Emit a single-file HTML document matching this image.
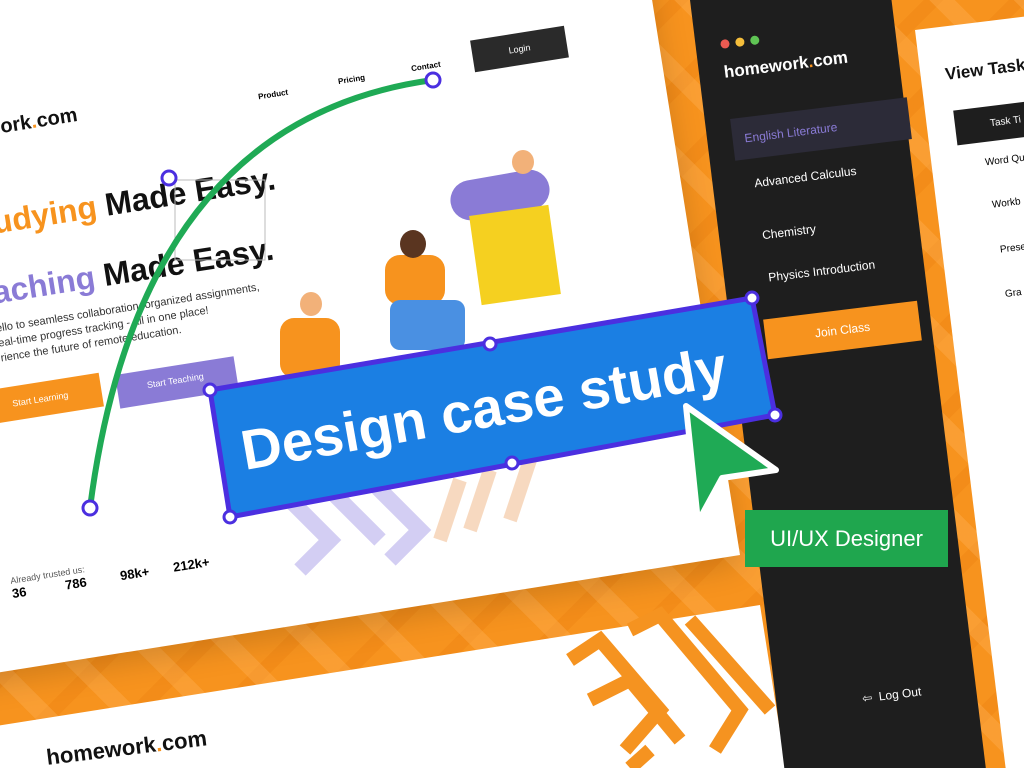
<!DOCTYPE html>
<html><head><meta charset="utf-8"><style>
*{margin:0;padding:0;box-sizing:border-box;white-space:nowrap}
html,body{width:1024px;height:768px;overflow:hidden}
body{position:relative;background:#f7931e;font-family:"Liberation Sans",sans-serif}
#w{position:absolute;left:0;top:0;width:1024px;height:768px;overflow:hidden}
.abs{position:absolute}
.pat{background:repeating-linear-gradient(45deg,rgba(255,180,90,.35) 0 18px,transparent 18px 60px),repeating-linear-gradient(-45deg,rgba(230,120,10,.25) 0 14px,transparent 14px 60px)}
</style></head><body><div id="w">
<div class="abs pat" style="inset:0"></div>

<!-- bottom white card -->
<div class="abs" style="left:-40px;top:605px;width:800px;height:300px;background:#fff;transform:rotate(-9deg);transform-origin:100% 0"></div>
<div class="abs" style="left:45px;top:745px;font-size:22px;font-weight:bold;color:#111;transform:rotate(-7deg);transform-origin:0 0">homework<span style="color:#f7931e">.</span>com</div>
<svg class="abs" style="left:530px;top:600px" width="260" height="168"><g fill="none" stroke="#f59320" stroke-width="14"><path d="M40 60 L70 40 L130 110 L95 150 M60 100 L100 80 L150 140 M100 30 L130 15 L210 110 L185 150 M160 20 L240 110 M120 150 L100 168"/></g></svg>

<!-- main white card -->
<div class="abs" style="left:-60px;top:-125px;width:800px;height:680px;background:#fff;transform:rotate(-9deg);transform-origin:100% 100%;box-shadow:0 10px 30px rgba(0,0,0,.15)"></div>

<div class="abs" style="left:0;top:110px;font-size:20px;font-weight:bold;transform:rotate(-9deg);color:#111">ork<span style="color:#f7931e">.</span>com</div>
<div class="abs" style="left:-10px;top:205px;font-size:32px;font-weight:bold;transform:rotate(-9deg);transform-origin:0 0;color:#111"><span style="color:#f7931e">udying</span> Made Easy.</div>
<div class="abs" style="left:-10px;top:275px;font-size:32px;font-weight:bold;transform:rotate(-9deg);transform-origin:0 0;color:#111"><span style="color:#8a7bd6">aching</span> Made Easy.</div>
<div class="abs" style="left:-5px;top:322px;font-size:11px;line-height:15px;color:#333;transform:rotate(-9deg);transform-origin:0 0">ello to seamless collaboration, organized assignments,<br>eal-time progress tracking - all in one place!<br>rience the future of remote education.</div>
<div class="abs" style="left:-10px;top:390px;width:110px;height:34px;background:#f7931e;color:#fff;font-size:9px;padding:12px 20px;transform:rotate(-9deg);transform-origin:0 0">Start Learning</div>
<div class="abs" style="left:115px;top:375px;width:120px;height:34px;background:#8a7bd6;color:#fff;font-size:9px;padding:10px 30px;transform:rotate(-9deg);transform-origin:0 0">Start Teaching</div>
<div class="abs" style="left:258px;top:90px;font-size:8px;font-weight:bold;transform:rotate(-9deg)">Product</div>
<div class="abs" style="left:338px;top:75px;font-size:8px;font-weight:bold;transform:rotate(-9deg)">Pricing</div>
<div class="abs" style="left:411px;top:62px;font-size:8px;font-weight:bold;transform:rotate(-9deg)">Contact</div>
<div class="abs" style="left:472px;top:33px;width:95px;height:32px;background:#2a2a2a;color:#fff;font-size:9px;text-align:center;line-height:32px;transform:rotate(-9deg)">Login</div>
<div class="abs" style="left:10px;top:570px;font-size:9px;color:#555;transform:rotate(-9deg)">Already trusted us:</div>
<div class="abs" style="left:12px;top:585px;font-size:13px;font-weight:bold;transform:rotate(-9deg)">36</div>
<div class="abs" style="left:65px;top:576px;font-size:13px;font-weight:bold;transform:rotate(-9deg)">786</div>
<div class="abs" style="left:120px;top:566px;font-size:13px;font-weight:bold;transform:rotate(-9deg)">98k+</div>
<div class="abs" style="left:173px;top:557px;font-size:13px;font-weight:bold;transform:rotate(-9deg)">212k+</div>

<!-- illustration approx -->
<div class="abs" style="left:450px;top:175px;width:100px;height:40px;background:#8a7bd6;border-radius:20px;transform:rotate(-10deg)"></div>
<div class="abs" style="left:475px;top:210px;width:80px;height:90px;background:#f5d020;transform:rotate(-8deg)"></div>
<div class="abs" style="left:385px;top:255px;width:60px;height:50px;background:#f7931e;border-radius:15px"></div>
<div class="abs" style="left:390px;top:300px;width:75px;height:50px;background:#4a90e2;border-radius:10px"></div>
<div class="abs" style="left:280px;top:318px;width:60px;height:60px;background:#f7931e;border-radius:14px"></div>
<div class="abs" style="left:400px;top:230px;width:26px;height:28px;background:#5a3520;border-radius:50%"></div>
<div class="abs" style="left:300px;top:292px;width:22px;height:24px;background:#f2b179;border-radius:50%"></div>
<div class="abs" style="left:512px;top:150px;width:22px;height:24px;background:#f2b179;border-radius:50%"></div>
<svg class="abs" style="left:280px;top:440px" width="380" height="140"><g fill="none" stroke="#c8c2f0" stroke-width="16" opacity=".8"><path d="M10 60 L50 100 L20 130 M50 50 L100 100 M90 40 L140 90 L110 120"/></g><g fill="none" stroke="#f5cfb0" stroke-width="14" opacity=".8"><path d="M180 40 L160 100 M210 30 L190 90 M250 20 L230 80"/></g></svg>

<!-- dark panel -->
<div class="abs" style="left:690px;top:0;width:200px;height:800px;background:#1e1e1e;transform:rotate(-7deg);transform-origin:0 0"></div>
<div class="abs" style="left:720px;top:40px;width:200px;transform:rotate(-7deg);transform-origin:0 0;color:#fff">
 <div style="display:flex;gap:6px;margin-bottom:14px"><span style="width:9px;height:9px;border-radius:50%;background:#ec5b52"></span><span style="width:9px;height:9px;border-radius:50%;background:#f5be3b"></span><span style="width:9px;height:9px;border-radius:50%;background:#5fc454"></span></div>
 <div style="font-size:17px;font-weight:bold">homework<span style="color:#f7931e">.</span>com</div>
</div>
<div class="abs" style="left:732px;top:108px;width:178px;height:42px;background:#2c2b38;transform:rotate(-7deg);color:#8a7bd6;font-size:12px;padding:14px 12px">English Literature</div>
<div class="abs" style="left:754px;top:170px;color:#fff;font-size:12px;transform:rotate(-7deg)">Advanced Calculus</div>
<div class="abs" style="left:762px;top:225px;color:#fff;font-size:12px;transform:rotate(-7deg)">Chemistry</div>
<div class="abs" style="left:768px;top:264px;color:#fff;font-size:12px;transform:rotate(-7deg)">Physics Introduction</div>
<div class="abs" style="left:765px;top:310px;width:155px;height:40px;background:#f7931e;color:#fff;font-size:12px;text-align:center;line-height:40px;transform:rotate(-7deg)">Join Class</div>
<div class="abs" style="left:862px;top:688px;color:#fff;font-size:12px;transform:rotate(-7deg)">⇦ &nbsp;Log Out</div>

<!-- right white panel -->
<div class="abs" style="left:915px;top:30px;width:200px;height:800px;background:#fff;transform:rotate(-7deg);transform-origin:0 0"></div>
<div class="abs" style="left:945px;top:60px;font-size:17px;font-weight:bold;color:#111;transform:rotate(-7deg)">View Task</div>
<div class="abs" style="left:955px;top:105px;width:90px;height:35px;background:#1e1e1e;color:#fff;font-size:10px;padding:12px 35px;transform:rotate(-7deg)">Task Ti</div>
<div class="abs" style="left:985px;top:155px;font-size:10px;transform:rotate(-7deg)">Word Qu</div>
<div class="abs" style="left:992px;top:198px;font-size:10px;transform:rotate(-7deg)">Workb</div>
<div class="abs" style="left:1000px;top:243px;font-size:10px;transform:rotate(-7deg)">Prese</div>
<div class="abs" style="left:1005px;top:288px;font-size:10px;transform:rotate(-7deg)">Gra</div>

<svg class="abs" style="left:0;top:0" width="1024" height="768">
 <rect x="175" y="180" width="90" height="80" fill="none" stroke="#bbb" stroke-width="1"/>
 <path d="M90 508 Q140 120 433 80" fill="none" stroke="#1faa55" stroke-width="6"/>
 <circle cx="90" cy="508" r="7" fill="#fff" stroke="#4b2fe0" stroke-width="3"/>
 <circle cx="433" cy="80" r="7" fill="#fff" stroke="#4b2fe0" stroke-width="3"/>
 <circle cx="169" cy="178" r="7" fill="#fff" stroke="#4b2fe0" stroke-width="3"/>
 <polygon points="210,390 752,298 775,415 230,517" fill="#1b7fe3" stroke="#4b2fe0" stroke-width="5"/>
 <text x="245" y="470" transform="rotate(-10 245 470)" font-family="Liberation Sans" font-weight="bold" font-size="56" fill="#fff">Design case study</text>
 <g fill="#fff" stroke="#4b2fe0" stroke-width="3">
 <circle cx="210" cy="390" r="6"/><circle cx="752" cy="298" r="6"/><circle cx="775" cy="415" r="6"/><circle cx="230" cy="517" r="6"/><circle cx="490" cy="344" r="6"/><circle cx="512" cy="463" r="6"/></g>
 <path d="M686 406 L776 470 L722 478 L698 522 Z" fill="#1faa55" stroke="#fff" stroke-width="6" stroke-linejoin="round"/>
</svg>
<div class="abs" style="left:745px;top:510px;width:203px;height:57px;background:#1fa64e;color:#fff;font-size:22px;line-height:57px;text-align:center">UI/UX Designer</div>
</div></body></html>
